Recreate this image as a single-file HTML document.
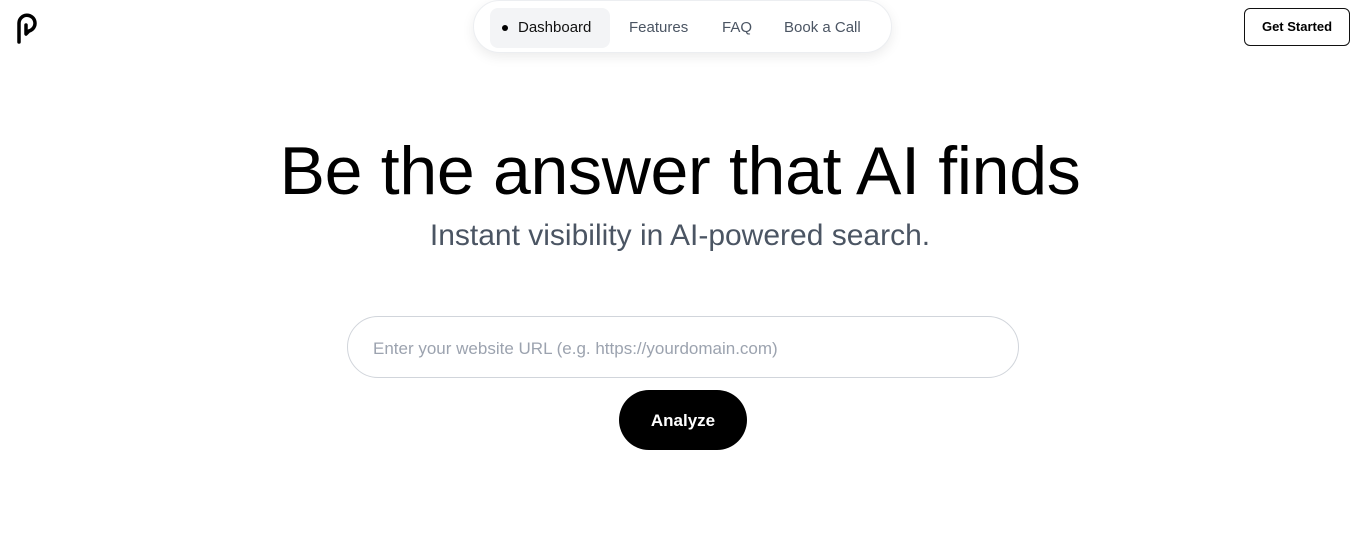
<!DOCTYPE html>
<html><head><meta charset="utf-8"><style>
*{box-sizing:border-box;margin:0;padding:0}
body{width:1360px;height:548px;background:#fff;font-family:"Liberation Sans",sans-serif;position:relative;overflow:hidden}
.logo{position:absolute;left:14px;top:11px}
.nav{position:absolute;left:473px;top:0;width:419px;height:53px;border-radius:27px;background:#fff;border:1px solid #eceef1;box-shadow:0 4px 12px rgba(0,0,0,.08);}
.nav span{position:absolute;top:18px;font-size:15px;color:#4b5563}
.dash{position:absolute;left:16px;top:7px;width:120px;height:40px;background:#f3f4f6;border-radius:8px}
.dot{position:absolute;left:28px;top:24px;width:6px;height:6px;border-radius:50%;background:#000}
.gs{position:absolute;left:1244px;top:8px;width:106px;height:38px;border:1px solid #111;border-radius:6px;font-size:13px;font-weight:bold;text-align:center;line-height:36px;color:#000}
h1{position:absolute;left:0;width:1360px;top:132px;text-align:center;font-size:68px;font-weight:normal;color:#000;letter-spacing:-.3px}
.sub{position:absolute;left:0;width:1360px;top:219px;text-align:center;font-size:30px;color:#4b5563}
.inp{position:absolute;left:347px;top:316px;width:672px;height:62px;border:1px solid #d1d5db;border-radius:31px;font-size:17px;color:#9ca3af;padding-left:25px;line-height:63px}
.btn{position:absolute;left:619px;top:390px;width:128px;height:60px;background:#000;border-radius:30px;color:#fff;font-weight:bold;font-size:17px;text-align:center;line-height:61px}
</style></head><body>
<svg class="logo" width="28" height="34" viewBox="0 0 28 34"><path d="M5 31 V12 A8 8 0 1 1 15 20 L12 23 V14" fill="none" stroke="#000" stroke-width="3.5" stroke-linecap="round" stroke-linejoin="round"/></svg>
<div class="nav"><div class="dash"></div>
<div class="dot"></div>
<span style="left:44px;color:#111">Dashboard</span>
<span style="left:155px">Features</span>
<span style="left:248px">FAQ</span>
<span style="left:310px">Book a Call</span></div>
<div class="gs">Get Started</div>
<h1>Be the answer that AI finds</h1>
<div class="sub">Instant visibility in AI-powered search.</div>
<div class="inp">Enter your website URL (e.g. https://yourdomain.com)</div>
<div class="btn">Analyze</div>
</body></html>
